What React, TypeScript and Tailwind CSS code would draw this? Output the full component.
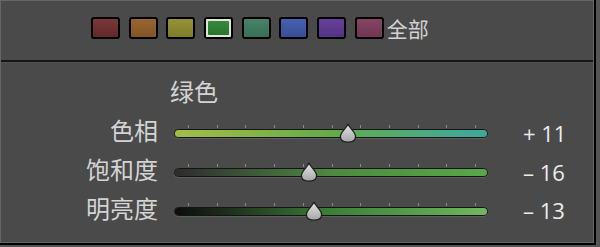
import React from 'react';

const swatches = [
  { from: '#7a3838', to: '#622828' },
  { from: '#986632', to: '#835426' },
  { from: '#959236', to: '#807d2a' },
  { from: '#348a3a', to: '#2a742e', active: true },
  { from: '#468468', to: '#386f56' },
  { from: '#4660b0', to: '#3a4f98' },
  { from: '#66409a', to: '#553382' },
  { from: '#864464', to: '#703652' },
];

const sliders = [
  { label: '色相', value: '+ 11', pos: 174, track: 'bg-linear-to-r from-[#a4bc48] via-[#62ac48] to-[#3ca89c]' },
  { label: '饱和度', value: '– 16', pos: 135, track: 'bg-linear-to-r from-[#2c2c2c] via-[#4c8a40] to-[#58a848]' },
  { label: '明亮度', value: '– 13', pos: 140, track: 'bg-linear-to-r from-[#0c0c0c] via-[#3c8038] to-[#70b860]' },
];

const ticks = Array.from({ length: 11 }, (_, i) => 14 + i * 28.7);

const Thumb = () => (
  <svg width="18" height="20" viewBox="0 0 18 20" className="block">
    <defs>
      <linearGradient id="thumbFill" x1="0" y1="0" x2="0" y2="1">
        <stop offset="0" stopColor="#e6e6e6" />
        <stop offset="1" stopColor="#a6a6a6" />
      </linearGradient>
    </defs>
    <path
      d="M9 0.8 C10 4.8 16.6 8.8 16.6 13.6 C16.6 17.4 13.2 19.2 9 19.2 C4.8 19.2 1.4 17.4 1.4 13.6 C1.4 8.8 8 4.8 9 0.8 Z"
      fill="url(#thumbFill)"
      stroke="#1c1c1c"
      strokeWidth="1.3"
    />
  </svg>
);

const App = () => {
  return (
    <div className="w-[600px] h-[247px] bg-[#555555] overflow-hidden" style={{ fontFamily: '"Noto Sans CJK SC", "Noto Sans", sans-serif' }}>
      <div className="w-[596px] h-[245px] border-r-2 border-b-2 border-black">
        <div className="h-full border border-[#666666] bg-[#4a4a4a] flex flex-col">
          {/* colour picker */}
          <div className="h-[59px] flex items-start pt-[16px] pl-[90px]">
            <div className="flex items-center gap-[8.7px]">
              {swatches.map((s, i) => (
                <div
                  key={i}
                  className={`w-[29px] h-[22px] rounded-[3px] border-2 border-black overflow-hidden ${s.active ? 'p-[2px] bg-[#e2e4d6]' : ''}`}
                >
                  <div
                    className="w-full h-full rounded-[1px]"
                    style={{ background: `linear-gradient(to bottom, ${s.from}, ${s.to})` }}
                  />
                </div>
              ))}
            </div>
            <span className="ml-[3px] text-[21px] leading-[22px] text-[#d2d2d2]">全部</span>
          </div>
          <div className="h-[2px] bg-[#161616]" />
          <div className="h-px bg-[#525252]" />

          {/* sliders */}
          <div className="pl-[169px] pt-[13px] text-[24px] leading-[30px] text-[#d4d4d4]">绿色</div>
          <div className="mt-[8px] flex flex-col">
            {sliders.map((s) => (
              <div key={s.label} className="h-[38.7px] flex items-center">
                <div className="w-[157px] text-right text-[24px] leading-none text-[#d4d4d4] mb-[6px]">{s.label}</div>
                <div className="relative ml-[16px] w-[314px] h-[20px]">
                  {ticks.map((t) => (
                    <div key={t} className="absolute top-[2px] w-px h-[3px] bg-[#8a8a8a]" style={{ left: t }} />
                  ))}
                  <div className="absolute top-[6px] left-0 right-0 h-[9px] rounded-full border-[1.5px] border-[#141414] shadow-[0_1px_0_#5e5e5e]">
                    <div className={`w-full h-full rounded-full ${s.track}`} />
                  </div>
                  <div className="absolute top-[0px]" style={{ left: s.pos - 9 }}>
                    <Thumb />
                  </div>
                </div>
                <div className="ml-[35px] text-[22px] leading-none text-[#ececec] mb-[1px]" style={{ fontFamily: '"Open Sans", "Noto Sans", sans-serif' }}>
                  {s.value}
                </div>
              </div>
            ))}
          </div>
        </div>
      </div>
    </div>
  );
};

export default App;
